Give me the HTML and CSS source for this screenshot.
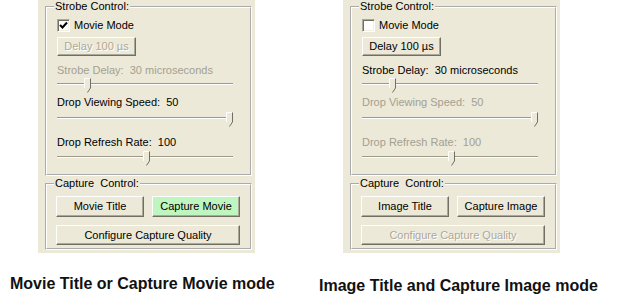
FILE: index.html
```html
<!DOCTYPE html>
<html lang="en">
<head>
    <meta charset="UTF-8">
    <title>Strobe and Capture Control</title>
    <link rel="stylesheet" href="styles.css">
</head>
<body>
    <div class="screens">
        <div class="panel">
            <fieldset class="group strobe">
                <legend>Strobe Control:</legend>
                <label class="check"><span class="box"><svg width="9" height="9" viewBox="0 0 9 9"><path d="M1 4 L3.5 6.5 L8 1.5" fill="none" stroke="#000" stroke-width="2"/></svg></span>Movie Mode</label>
                <button class="btn delay" disabled>Delay 100 &micro;s</button>
                <div class="label first dim">Strobe Delay:&nbsp; 30 microseconds</div>
                <div class="slider s1"><div class="track"></div><span class="thumb" style="left:27px"><svg width="7" height="15" viewBox="0 0 7 15"><polygon points="0.5,0.5 6.5,0.5 6.5,10 3.5,14.5 0.5,10" fill="#ece9d8"/><polyline points="0.5,10 0.5,0.5 6,0.5" fill="none" stroke="#fff"/><polyline points="6.5,0.5 6.5,10 3.5,14.5" fill="none" stroke="#716f64"/></svg></span></div>
                <div class="label second">Drop Viewing Speed:&nbsp; 50</div>
                <div class="slider s2"><div class="track"></div><span class="thumb" style="left:169px"><svg width="7" height="15" viewBox="0 0 7 15"><polygon points="0.5,0.5 6.5,0.5 6.5,10 3.5,14.5 0.5,10" fill="#ece9d8"/><polyline points="0.5,10 0.5,0.5 6,0.5" fill="none" stroke="#fff"/><polyline points="6.5,0.5 6.5,10 3.5,14.5" fill="none" stroke="#716f64"/></svg></span></div>
                <div class="label third">Drop Refresh Rate:&nbsp; 100</div>
                <div class="slider s3"><div class="track"></div><span class="thumb" style="left:86px"><svg width="7" height="15" viewBox="0 0 7 15"><polygon points="0.5,0.5 6.5,0.5 6.5,10 3.5,14.5 0.5,10" fill="#ece9d8"/><polyline points="0.5,10 0.5,0.5 6,0.5" fill="none" stroke="#fff"/><polyline points="6.5,0.5 6.5,10 3.5,14.5" fill="none" stroke="#716f64"/></svg></span></div>
            </fieldset>
            <fieldset class="group capture">
                <legend>Capture&nbsp; Control:</legend>
                <div class="btn-row">
                    <button class="btn half">Movie Title</button>
                    <button class="btn half green">Capture Movie</button>
                </div>
                <button class="btn wide">Configure Capture Quality</button>
            </fieldset>
        </div>

        <div class="panel">
            <fieldset class="group strobe">
                <legend>Strobe Control:</legend>
                <label class="check"><span class="box"></span>Movie Mode</label>
                <button class="btn delay">Delay 100 &micro;s</button>
                <div class="label first">Strobe Delay:&nbsp; 30 microseconds</div>
                <div class="slider s1"><div class="track"></div><span class="thumb" style="left:27px"><svg width="7" height="15" viewBox="0 0 7 15"><polygon points="0.5,0.5 6.5,0.5 6.5,10 3.5,14.5 0.5,10" fill="#ece9d8"/><polyline points="0.5,10 0.5,0.5 6,0.5" fill="none" stroke="#fff"/><polyline points="6.5,0.5 6.5,10 3.5,14.5" fill="none" stroke="#716f64"/></svg></span></div>
                <div class="label second dim">Drop Viewing Speed:&nbsp; 50</div>
                <div class="slider s2"><div class="track"></div><span class="thumb" style="left:169px"><svg width="7" height="15" viewBox="0 0 7 15"><polygon points="0.5,0.5 6.5,0.5 6.5,10 3.5,14.5 0.5,10" fill="#ece9d8"/><polyline points="0.5,10 0.5,0.5 6,0.5" fill="none" stroke="#fff"/><polyline points="6.5,0.5 6.5,10 3.5,14.5" fill="none" stroke="#716f64"/></svg></span></div>
                <div class="label third dim">Drop Refresh Rate:&nbsp; 100</div>
                <div class="slider s3"><div class="track"></div><span class="thumb" style="left:86px"><svg width="7" height="15" viewBox="0 0 7 15"><polygon points="0.5,0.5 6.5,0.5 6.5,10 3.5,14.5 0.5,10" fill="#ece9d8"/><polyline points="0.5,10 0.5,0.5 6,0.5" fill="none" stroke="#fff"/><polyline points="6.5,0.5 6.5,10 3.5,14.5" fill="none" stroke="#716f64"/></svg></span></div>
            </fieldset>
            <fieldset class="group capture">
                <legend>Capture&nbsp; Control:</legend>
                <div class="btn-row">
                    <button class="btn half">Image Title</button>
                    <button class="btn half">Capture Image</button>
                </div>
                <button class="btn wide" disabled>Configure Capture Quality</button>
            </fieldset>
        </div>
    </div>

    <div class="captions">
        <p class="caption">Movie Title or Capture Movie mode</p>
        <p class="caption right">Image Title and Capture Image mode</p>
    </div>
</body>
</html>
```

FILE: styles.css
```css
* {
    margin: 0;
    padding: 0;
    box-sizing: border-box;
}
body {
    background: #fff;
    font-family: "Liberation Sans", Arial, sans-serif;
    color: #000;
}
.screens {
    display: flex;
    gap: 88px;
    padding-left: 38px;
}
.panel {
    width: 217px;
    height: 253px;
    background: #ece9d8;
    display: flex;
    flex-direction: column;
    font-size: 11px;
    line-height: 13px;
}
.group {
    min-width: 0;
    margin: 0 3px 0 7px;
    padding: 0 0 8px 9px;
    border: 2px groove #fff;
    display: flex;
    flex-direction: column;
    align-items: flex-start;
}
.group legend {
    margin-left: -2px;
    padding: 0 1px;
    font-size: 11px;
    line-height: 13px;
}
.capture {
    margin-top: 1px;
    padding-bottom: 3px;
}
.check {
    display: flex;
    align-items: center;
    margin-top: 5px;
    margin-left: 1px;
    height: 14px;
}
.box {
    width: 13px;
    height: 13px;
    margin-right: 4px;
    background: #fff;
    border: 1px solid;
    border-color: #aca899 #fff #fff #aca899;
    box-shadow: inset 1px 1px #716f64, inset -1px -1px #f1efe2;
    display: flex;
    align-items: center;
    justify-content: center;
}
.btn {
    display: block;
    font: inherit;
    color: #000;
    background: #ece9d8;
    border: 1px solid;
    border-color: #fff #716f64 #716f64 #fff;
    box-shadow: inset -1px -1px #aca899;
    text-align: center;
}
.btn:disabled {
    color: #aca899;
    text-shadow: 1px 1px #fff;
}
.delay {
    width: 79px;
    height: 19px;
    margin-top: 5px;
    margin-left: 1px;
}
.label {
    margin-left: 1px;
}
.label.first {
    margin-top: 8px;
}
.label.second {
    margin-top: 3px;
}
.label.third {
    margin-top: 9px;
}
.dim {
    color: #a3a092;
}
.slider {
    position: relative;
    width: 176px;
    height: 15px;
    margin-left: 1px;
}
.slider.s1 {
    margin-top: 1px;
}
.slider.s2 {
    margin-top: 3px;
}
.slider.s3 {
    margin-top: 2px;
}
.track {
    margin-top: 5px;
    height: 2px;
    border-top: 1px solid #9d9a8a;
    background: #fff;
}
.thumb {
    position: absolute;
    top: 0;
    width: 7px;
    height: 15px;
}
.thumb svg {
    display: block;
}
.btn-row {
    display: flex;
    gap: 8px;
    margin-top: 6px;
}
.half {
    width: 88px;
    height: 21px;
}
.green {
    background: #bff5bf;
}
.wide {
    width: 184px;
    height: 20px;
    margin-top: 8px;
}
.captions {
    display: grid;
    grid-template-columns: 309px auto;
    padding: 22px 0 0 10px;
}
.caption {
    font-size: 16px;
    font-weight: bold;
    line-height: 18px;
    color: #111;
}
.caption.right {
    margin-top: 2px;
}
```
